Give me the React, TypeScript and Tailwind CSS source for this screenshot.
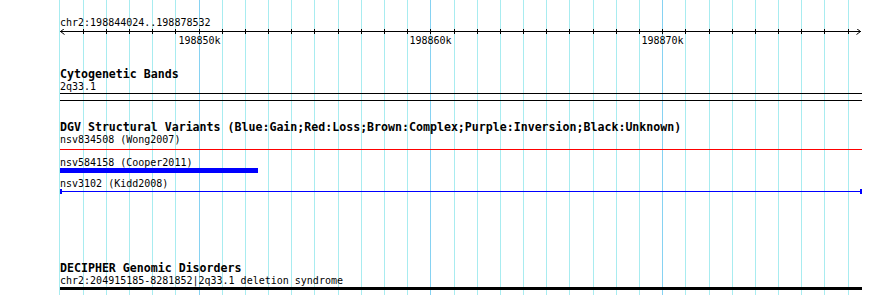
const START = 198844024
const END = 198878532
const LEFT = 60
const WIDTH = 800

const toX = (bp: number) => Math.round(LEFT + ((bp - START) * WIDTH) / (END - START))

const gridLines: { x: number; major: boolean }[] = []
for (let bp = 198844000; bp <= 198878000; bp += 1000) {
  gridLines.push({ x: toX(bp), major: bp % 10000 === 0 })
}

const mono = "font-['DejaVu_Sans_Mono','Liberation_Mono',monospace]"

function Grid() {
  return (
    <svg className="absolute inset-0" width={890} height={295} shapeRendering="crispEdges">
      {gridLines.map((g) => (
        <rect key={g.x} x={g.x} y={0} width={1} height={295} fill={g.major ? "#86d2f2" : "#a8ecf0"} />
      ))}
    </svg>
  )
}

function Ruler() {
  return (
    <svg width={806} height={18} className="block -ml-[2px]" shapeRendering="crispEdges">
      <g transform="translate(2,0)">
        <rect x={0} y={2} width={801} height={1} fill="#000" />
        <path d="M4.5 -0.5 L0.5 2.5 L4.5 5.5" fill="none" stroke="#000" strokeWidth={1} shapeRendering="auto" />
        <path d="M796.5 -0.5 L800.5 2.5 L796.5 5.5" fill="none" stroke="#000" strokeWidth={1} shapeRendering="auto" />
        {gridLines
          .filter((g) => g.x > LEFT + 2)
          .map((g) => (
            <rect key={g.x} x={g.x - LEFT} y={0} width={1} height={5} fill="#000" />
          ))}
        {[198850000, 198860000, 198870000].map((bp) => (
          <text
            key={bp}
            x={toX(bp) - LEFT + 0.5}
            y={15}
            textAnchor="middle"
            fontFamily="DejaVu Sans Mono, monospace"
            fontSize={10}
            fill="#000"
          >
            {bp / 1000}k
          </text>
        ))}
      </g>
    </svg>
  )
}

function Label({ children, className = "h-[13px] leading-[13px]" }: { children: React.ReactNode; className?: string }) {
  return <div className={`${className} text-[10px] whitespace-nowrap text-black`}>{children}</div>
}

function Title({ children, className = "h-[12px] leading-[13px]" }: { children: React.ReactNode; className?: string }) {
  return <div className={`${className} text-[11.6px] font-bold whitespace-nowrap text-black`}>{children}</div>
}

export default function App() {
  return (
    <div className={`relative w-[890px] h-[295px] overflow-hidden bg-white ${mono}`}>
      <Grid />
      <div className="relative pl-[60px] pt-[16px]">
        <Label>chr2:198844024..198878532</Label>
        <Ruler />

        <Title className="mt-[21px] h-[12px] leading-[13px]">Cytogenetic Bands</Title>
        <Label>2q33.1</Label>
        <div className="w-[802px] h-[8px] border-y border-black" />

        {/* title and first feature label sit tight together in the track */}
        <Title className="mt-[21px] h-[10px] leading-[10px]">
          DGV Structural Variants (Blue:Gain;Red:Loss;Brown:Complex;Purple:Inversion;Black:Unknown)
        </Title>
        <Label className="mt-[2px] h-[11px] leading-[11px]">nsv834508 (Wong2007)</Label>
        <div className="mt-[4px] w-[802px] h-px bg-[#ff0000]" />

        <Label className="mt-[6px] h-[12px] leading-[13px]">nsv584158 (Cooper2011)</Label>
        <div className="w-[198px] h-[5px] bg-[#0000ff]" />

        <Label className="mt-[4px] h-[12px] leading-[13px]">nsv3102 (Kidd2008)</Label>
        <div className="flex w-[802px] h-[5px] items-center">
          <div className="w-[2px] h-[5px] bg-[#0000ff]" />
          <div className="flex-1 h-px bg-[#0000ff]" />
          <div className="w-[2px] h-[5px] bg-[#0000ff]" />
        </div>

        <Title className="mt-[68px] h-[12px] leading-[13px]">DECIPHER Genomic Disorders</Title>
        <Label>chr2:204915185-8281852|2q33.1 deletion syndrome</Label>
        <div className="w-[802px] h-[3px] bg-black" />
      </div>
    </div>
  )
}
